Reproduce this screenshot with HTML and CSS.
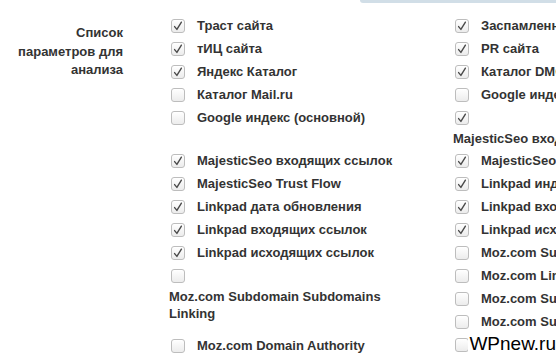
FILE: index.html
```html
<!DOCTYPE html>
<html lang="ru">
<head>
<meta charset="utf-8">
<title>Список параметров</title>
<link rel="stylesheet" href="styles.css">
</head>
<body>
<div class="topbar"><div class="band"></div></div>
<div class="form-row">
  <div class="field-label">Список параметров для анализа</div>
  <div class="options">
    <div class="grid-top">
      <label class="item"><span class="cb on"><svg viewBox="0 0 14 14"><path d="M3.6 7.6 L5.9 10.4 L10.4 3.2"/></svg></span><span class="txt">Траст сайта</span></label>
      <label class="item"><span class="cb on"><svg viewBox="0 0 14 14"><path d="M3.6 7.6 L5.9 10.4 L10.4 3.2"/></svg></span><span class="txt">Заспамленность сайта</span></label>
      <label class="item"><span class="cb on"><svg viewBox="0 0 14 14"><path d="M3.6 7.6 L5.9 10.4 L10.4 3.2"/></svg></span><span class="txt">тИЦ сайта</span></label>
      <label class="item"><span class="cb on"><svg viewBox="0 0 14 14"><path d="M3.6 7.6 L5.9 10.4 L10.4 3.2"/></svg></span><span class="txt">PR сайта</span></label>
      <label class="item"><span class="cb on"><svg viewBox="0 0 14 14"><path d="M3.6 7.6 L5.9 10.4 L10.4 3.2"/></svg></span><span class="txt">Яндекс Каталог</span></label>
      <label class="item"><span class="cb on"><svg viewBox="0 0 14 14"><path d="M3.6 7.6 L5.9 10.4 L10.4 3.2"/></svg></span><span class="txt">Каталог DMOZ</span></label>
      <label class="item"><span class="cb"></span><span class="txt">Каталог Mail.ru</span></label>
      <label class="item"><span class="cb"></span><span class="txt">Google индекс (все страницы)</span></label>
      <label class="item"><span class="cb"></span><span class="txt">Google индекс (основной)</span></label>
      <label class="item stacked"><span class="cb-row"><span class="cb on"><svg viewBox="0 0 14 14"><path d="M3.6 7.6 L5.9 10.4 L10.4 3.2"/></svg></span></span><span class="txt">MajesticSeo входящих доменов</span></label>
    </div>
    <div class="cols">
      <div class="col">
        <label class="item"><span class="cb on"><svg viewBox="0 0 14 14"><path d="M3.6 7.6 L5.9 10.4 L10.4 3.2"/></svg></span><span class="txt">MajesticSeo входящих ссылок</span></label>
        <label class="item"><span class="cb on"><svg viewBox="0 0 14 14"><path d="M3.6 7.6 L5.9 10.4 L10.4 3.2"/></svg></span><span class="txt">MajesticSeo Trust Flow</span></label>
        <label class="item"><span class="cb on"><svg viewBox="0 0 14 14"><path d="M3.6 7.6 L5.9 10.4 L10.4 3.2"/></svg></span><span class="txt">Linkpad дата обновления</span></label>
        <label class="item"><span class="cb on"><svg viewBox="0 0 14 14"><path d="M3.6 7.6 L5.9 10.4 L10.4 3.2"/></svg></span><span class="txt">Linkpad входящих ссылок</span></label>
        <label class="item"><span class="cb on"><svg viewBox="0 0 14 14"><path d="M3.6 7.6 L5.9 10.4 L10.4 3.2"/></svg></span><span class="txt">Linkpad исходящих ссылок</span></label>
        <label class="item stacked two-line"><span class="cb-row"><span class="cb"></span></span><span class="txt">Moz.com Subdomain Subdomains Linking</span></label>
        <label class="item"><span class="cb"></span><span class="txt">Moz.com Domain Authority</span></label>
      </div>
      <div class="col">
        <label class="item"><span class="cb on"><svg viewBox="0 0 14 14"><path d="M3.6 7.6 L5.9 10.4 L10.4 3.2"/></svg></span><span class="txt">MajesticSeo Citation Flow</span></label>
        <label class="item"><span class="cb on"><svg viewBox="0 0 14 14"><path d="M3.6 7.6 L5.9 10.4 L10.4 3.2"/></svg></span><span class="txt">Linkpad индекс</span></label>
        <label class="item"><span class="cb on"><svg viewBox="0 0 14 14"><path d="M3.6 7.6 L5.9 10.4 L10.4 3.2"/></svg></span><span class="txt">Linkpad входящих доменов</span></label>
        <label class="item"><span class="cb on"><svg viewBox="0 0 14 14"><path d="M3.6 7.6 L5.9 10.4 L10.4 3.2"/></svg></span><span class="txt">Linkpad исходящих доменов</span></label>
        <label class="item"><span class="cb"></span><span class="txt">Moz.com Subdomain Authority</span></label>
        <label class="item"><span class="cb"></span><span class="txt">Moz.com Linking Root Domains</span></label>
        <label class="item"><span class="cb"></span><span class="txt">Moz.com Subdomain MozRank</span></label>
        <label class="item"><span class="cb"></span><span class="txt">Moz.com Subdomain MozTrust</span></label>
        <label class="item"><span class="cb"></span></label>
      </div>
    </div>
  </div>
</div>
<div class="watermark">WPnew.ru</div>
</body>
</html>
```

FILE: styles.css
```css
html, body {
  margin: 0;
  padding: 0;
  width: 556px;
  height: 355px;
  overflow: hidden;
  background: #ffffff;
}
body {
  position: relative;
  font-family: "Liberation Sans", Arial, sans-serif;
  font-weight: bold;
  font-size: 13px;
  color: #333333;
}
.topbar {
  display: flex;
  justify-content: flex-end;
  height: 3px;
}
.band {
  width: 196px;
  height: 3px;
  background: #d1dee7;
  border-bottom-left-radius: 6px;
}
.form-row {
  display: flex;
  gap: 46px;
  padding-top: 11px;
}
.field-label {
  width: 123px;
  flex: none;
  text-align: right;
  line-height: 18.5px;
  padding-top: 10px;
  box-sizing: border-box;
  padding-left: 10px;
}
.options {
  flex: none;
  width: 387px;
  overflow: hidden;
}
.grid-top {
  display: grid;
  grid-template-columns: 284px 103px;
  align-items: start;
}
.cols {
  display: grid;
  grid-template-columns: 284px 103px;
  align-items: start;
}
.col {
  display: flex;
  flex-direction: column;
  min-width: 0;
  overflow: hidden;
}
.grid-top > .item {
  min-width: 0;
  overflow: hidden;
}
.item {
  display: flex;
  align-items: center;
  height: 23px;
  white-space: nowrap;
}
.cb {
  flex: none;
  width: 12px;
  height: 12px;
  margin-left: 2px;
  margin-right: 12px;
  border: 1px solid #bdbdbd;
  border-radius: 3px;
  background: linear-gradient(#ffffff, #ececec);
  box-shadow: inset 0 1px 0 #ffffff;
  position: relative;
}
.cb svg {
  position: absolute;
  left: -1px;
  top: -1px;
  width: 14px;
  height: 14px;
  fill: none;
  stroke: #4a4a4a;
  stroke-width: 1.4;
  stroke-linecap: round;
  stroke-linejoin: round;
}
.txt {
  line-height: 17px;
}
.item.stacked {
  display: block;
  height: auto;
  padding-bottom: 2px;
  white-space: normal;
}
.cb-row {
  display: flex;
  align-items: center;
  height: 24px;
}
.item.stacked .txt {
  display: block;
  white-space: nowrap;
}
.item.two-line {
  padding-bottom: 12px;
}
.item.two-line .txt {
  white-space: normal;
  width: 230px;
}
.watermark {
  position: absolute;
  right: -1px;
  bottom: 0;
  font-family: "Liberation Sans", Arial, sans-serif;
  font-weight: normal;
  font-size: 19px;
  color: #000000;
  line-height: 22px;
  background: #ffffff;
  padding-left: 1px;
  padding-right: 1px;
}
```
